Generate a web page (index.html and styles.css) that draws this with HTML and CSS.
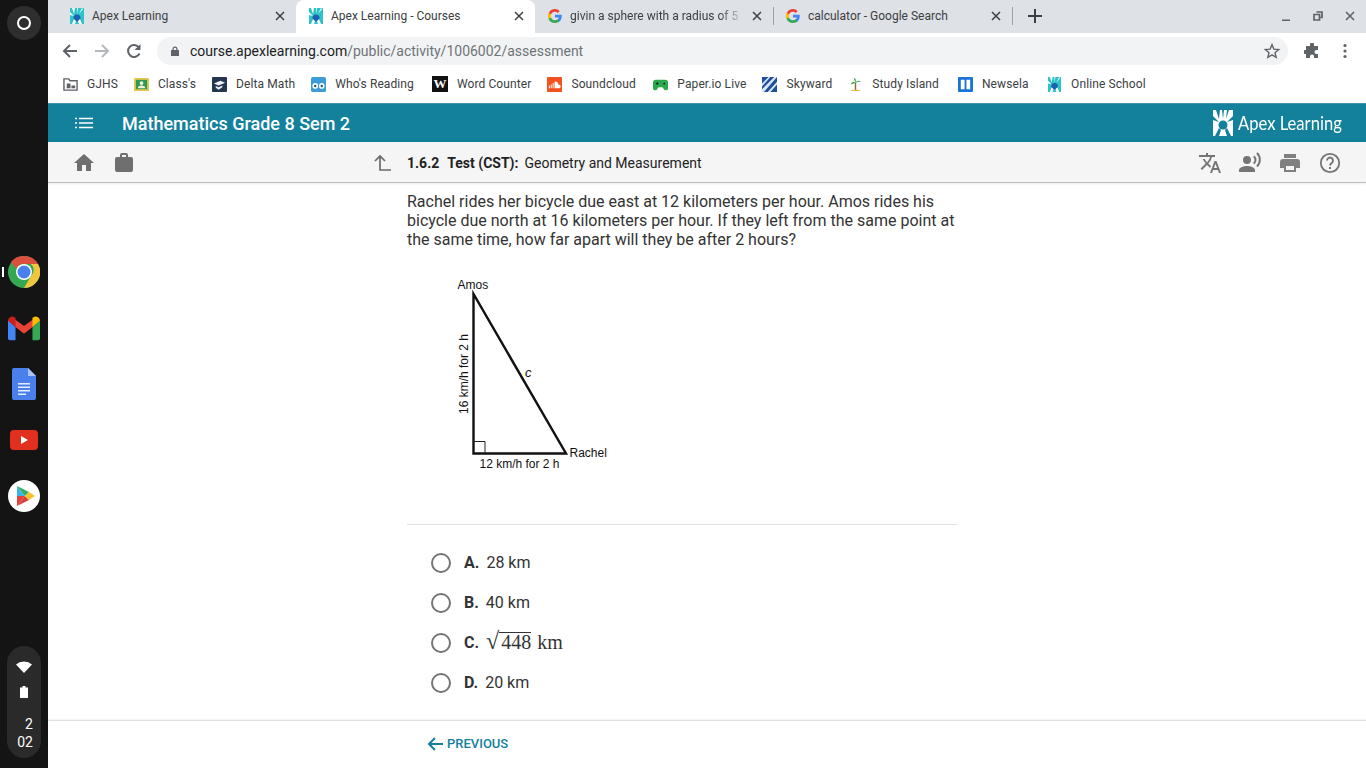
FILE: index.html
```html
<!DOCTYPE html>
<html lang="en">
<head>
<meta charset="utf-8">
<title>Apex Learning - Courses</title>
<link rel="stylesheet" href="styles.css">
</head>
<body>
<div class="screen">
  <aside class="shelf">
    <div class="launcher"><span class="launcher-ring"></span></div>
    <div class="apps">
      <div class="app-slot running">
        <svg class="app" viewBox="0 0 32 32"><circle cx="16" cy="16" r="16" fill="#34a853"/><path d="M16 0a16 16 0 0 1 14 8H16a8 8 0 0 0-7.500 5L3 6A16 16 0 0 1 16 0z" fill="#d9503f"/><path d="M30 8a16 16 0 0 1-14 24l7-12a8 8 0 0 0 0-12z" fill="#f0c63e"/><circle cx="16" cy="16" r="8" fill="#fff"/><circle cx="16" cy="16" r="6.500" fill="#4a80ec"/></svg>
      </div>
      <div class="app-slot">
        <svg class="app" viewBox="0 0 34 26"><path d="M0 5v19a2 2 0 0 0 2 2h6V12z" fill="#4285f4"/><path d="M34 5v19a2 2 0 0 1-2 2h-6V12z" fill="#34a853"/><path d="M0 5l8 7 9 7 9-7 8-7-5-3-12 9L5 2z" fill="#ea4335"/><path d="M0 5a4.500 4.500 0 0 1 7-3.500L8 2v10z" fill="#c5221f"/><path d="M34 5a4.500 4.500 0 0 0-7-3.500L26 2v10z" fill="#fbbc04"/></svg>
      </div>
      <div class="app-slot">
        <svg class="app doc" viewBox="0 0 24 32"><path d="M2 0h14l8 8v22a2 2 0 0 1-2 2H2a2 2 0 0 1-2-2V2a2 2 0 0 1 2-2z" fill="#4a80ec"/><path d="M16 0l8 8h-8z" fill="#a9c4f5"/><path d="M6 15h12v1.500H6zM6 18.500h12V20H6zM6 22h12v1.500H6zM6 25.500h8V27H6z" fill="#e4ecfc"/></svg>
      </div>
      <div class="app-slot">
        <svg class="app yt" viewBox="0 0 28 20"><rect width="28" height="20" rx="4" fill="#e1301e"/><path d="M11 6l7 4-7 4z" fill="#fff"/></svg>
      </div>
      <div class="app-slot">
        <svg class="app" viewBox="0 0 32 32"><circle cx="16" cy="16" r="16" fill="#fff"/><path d="M9 6v10h8z" fill="#3bb6e8"/><path d="M9 26V16h8z" fill="#e0433c"/><path d="M9 6l8 10 4-4z" fill="#38ad63"/><path d="M9 26l8-10 4 4z" fill="#d6403f"/><path d="M21 12l6 4-6 4-4-4z" fill="#f8c02c"/></svg>
      </div>
    </div>
    <div class="tray">
      <svg class="tray-wifi" viewBox="0 0 16 12"><path d="M0 3.500a12 12 0 0 1 16 0L8 12z" fill="#fff"/></svg>
      <svg class="tray-batt" viewBox="0 0 8 12"><path d="M2.500 0h3v1.500H8V12H0V1.500h2.500z" fill="#fff"/></svg>
      <div class="tray-time">2<br>02</div>
    </div>
  </aside>

  <div class="desktop">
    <div class="tabstrip">
      <div class="tab"><svg class="fav" viewBox="0 0 14 16"><use href="#apex"/></svg><span class="tab-title">Apex Learning</span><svg class="tab-x" viewBox="0 0 10 10"><path d="M1 1l8 8M9 1L1 9" stroke="#3c4043" stroke-width="1.500"/></svg></div>
      <div class="tab active"><svg class="fav" viewBox="0 0 14 16"><use href="#apex"/></svg><span class="tab-title">Apex Learning - Courses</span><svg class="tab-x" viewBox="0 0 10 10"><path d="M1 1l8 8M9 1L1 9" stroke="#3c4043" stroke-width="1.500"/></svg></div>
      <div class="tab"><svg class="fav" viewBox="0 0 14 14"><use href="#goog"/></svg><span class="tab-title fade">givin a sphere with a radius of 5</span><svg class="tab-x" viewBox="0 0 10 10"><path d="M1 1l8 8M9 1L1 9" stroke="#3c4043" stroke-width="1.500"/></svg></div>
      <div class="tab sep"><svg class="fav" viewBox="0 0 14 14"><use href="#goog"/></svg><span class="tab-title">calculator - Google Search</span><svg class="tab-x" viewBox="0 0 10 10"><path d="M1 1l8 8M9 1L1 9" stroke="#3c4043" stroke-width="1.500"/></svg></div>
      <div class="newtab">
        <svg viewBox="0 0 14 14" width="14" height="14"><path d="M7 0v14M0 7h14" stroke="#3c4043" stroke-width="2"/></svg>
      </div>
      <div class="winctl">
        <svg viewBox="0 0 10 10" width="10" height="10"><path d="M1 9.500h8" stroke="#5f6368" stroke-width="2"/></svg>
        <svg viewBox="0 0 10 10" width="10" height="10"><path d="M3.500 1h5.500v5.500H7.500M1 3.500h5.500V9H1z" fill="none" stroke="#5f6368" stroke-width="1.700"/></svg>
        <svg viewBox="0 0 10 10" width="10" height="10"><path d="M1 1l8 8M9 1L1 9" stroke="#5f6368" stroke-width="1.600"/></svg>
      </div>
    </div>

    <div class="toolbar">
      <svg class="nav" viewBox="0 0 16 16"><path d="M15 8H2M8 2L2 8l6 6" fill="none" stroke="#5f6368" stroke-width="2"/></svg>
      <svg class="nav" viewBox="0 0 16 16"><path d="M1 8h13M8 2l6 6-6 6" fill="none" stroke="#b4b8bc" stroke-width="2"/></svg>
      <svg class="nav" viewBox="0 0 16 16"><path d="M13.500 10.500A6 6 0 1 1 13 4.500" fill="none" stroke="#5f6368" stroke-width="2"/><path d="M14.500 1v6h-6z" fill="#5f6368"/></svg>
      <div class="omnibox">
        <svg class="lock" viewBox="0 0 8 10"><path d="M1.500 4V3a2.500 2.500 0 0 1 5 0v1H8v6H0V4zM2.700 4h2.600V3a1.300 1.300 0 0 0-2.600 0z" fill="#5f6368"/></svg>
        <span class="url"><span class="url-host">course.apexlearning.com</span>/public/activity/1006002/assessment</span>
        <svg class="star" viewBox="0 0 24 24"><path d="M12 3.500l2.500 6 6.500.5-5 4.200 1.600 6.300L12 17.200l-5.600 3.300L8 14.200 3 10l6.500-.5z" fill="none" stroke="#5f6368" stroke-width="1.800"/></svg>
      </div>
      <svg class="ext" viewBox="0 0 16 16"><path d="M6 1.500a2 2 0 0 1 4 0V3h4v4h-1.500a2 2 0 0 0 0 4H14v4h-4v-1.500a2 2 0 0 0-4 0V15H2v-4H1a2 2 0 0 1 0-4h1V3h4z" fill="#5f6368"/></svg>
      <svg class="menu" viewBox="0 0 4 16"><circle cx="2" cy="2.500" r="1.600" fill="#5f6368"/><circle cx="2" cy="8" r="1.600" fill="#5f6368"/><circle cx="2" cy="13.500" r="1.600" fill="#5f6368"/></svg>
    </div>

    <div class="bookmarks">
      <span class="bm"><svg viewBox="0 0 16 14"><path d="M1 1h5l1.500 2H15v10H1z" fill="#fff" stroke="#5f6368" stroke-width="1.500"/><path d="M4 6h4v5H4zM9 8h4v3H9z" fill="#5f6368"/></svg>GJHS</span>
      <span class="bm"><svg viewBox="0 0 16 16"><rect y="1" width="16" height="14" rx="1" fill="#e6c84a"/><rect x="2" y="3" width="12" height="10" fill="#2c9a58"/><circle cx="8" cy="6.500" r="2" fill="#f6f3d8"/><path d="M4 12a4 3 0 0 1 8 0z" fill="#f6f3d8"/></svg>Class's</span>
      <span class="bm"><svg viewBox="0 0 16 16"><rect width="16" height="16" rx="1" fill="#24364f"/><path d="M2 7l7-3 5 2-7 3zM4 9.500l3 1.500 4-2v2l-4 2.500-3-2z" fill="#eef1f5"/></svg>Delta Math</span>
      <span class="bm"><svg viewBox="0 0 16 16"><rect width="16" height="16" rx="2" fill="#3d9bd6"/><circle cx="4.500" cy="9.500" r="3" fill="#fff"/><circle cx="11.500" cy="9.500" r="3" fill="#fff"/><circle cx="4.500" cy="9.500" r="1.300" fill="#24537a"/><circle cx="11.500" cy="9.500" r="1.300" fill="#24537a"/></svg>Who's Reading</span>
      <span class="bm bm-word"><span class="bm-w">W</span>Word Counter</span>
      <span class="bm"><svg viewBox="0 0 16 16"><rect width="16" height="16" rx="1" fill="#f4511e"/><path d="M2 12V9h1v3zM4 12V8h1v4zM6 12V6.500h1V12zM8 12V5a3.500 3.500 0 0 1 4 3 2 2 0 0 1 1 4z" fill="#fff"/></svg>Soundcloud</span>
      <span class="bm bm-paper"><svg viewBox="0 0 16 14"><path d="M3 2h10a3 3 0 0 1 3 3v6a2 2 0 0 1-2 2h-1.500L10 10H6l-2.500 3H2a2 2 0 0 1-2-2V5a3 3 0 0 1 3-3z" fill="#2aa84a"/><path d="M3 6h3M4.500 4.500v3" stroke="#123" stroke-width="1"/><circle cx="12" cy="6" r="1" fill="#123"/></svg>Paper.io Live</span>
      <span class="bm"><svg viewBox="0 0 16 16"><rect width="16" height="16" fill="#1d4f9c"/><path d="M0 13L13 0h3L2 16H0zM6 16L16 5v3L9 16zM0 7l7-7h2L0 10z" fill="#d8e6f6"/></svg>Skyward</span>
      <span class="bm"><svg viewBox="0 0 16 16"><path d="M8 15V6" stroke="#8a6a2e" stroke-width="1.500"/><path d="M8 6L3 8c1-3 3-4 5-2zm0 0c1-2 4-3 6-1l-3 0zM8 6L6 1c2 0 3 2 2 5z" fill="#34a04f"/><path d="M2 15c3-2 9-2 12 0z" fill="#e8b83c"/></svg>Study Island</span>
      <span class="bm bm-news"><svg viewBox="0 0 16 16"><rect width="16" height="16" rx="1" fill="#1a73d8"/><path d="M3 3h4v10H3zM9 3h4v10H9z" fill="#fff"/></svg>Newsela</span>
      <span class="bm bm-online"><svg viewBox="0 0 14 16"><use href="#apex"/></svg>Online School</span>
    </div>

    <header class="course-bar">
      <svg class="hamb" viewBox="0 0 18 12"><path d="M0 1.500h2M4 1.500h14M0 6h2M4 6h14M0 10.500h2M4 10.500h14" stroke="#fff" stroke-width="1.600"/></svg>
      <h1 class="course-title">Mathematics Grade 8 Sem 2</h1>
      <div class="brand">
        <svg class="brand-mark" viewBox="0 0 20 26"><rect width="20" height="26" fill="#fff"/><path d="M3 0l3 9 1-9zM9 0l1 9 1-9zM14 0l-1 9 3-9zM0 6l6 6-6-2zM20 6l-6 6 6-2z" fill="#13819b"/><circle cx="10" cy="15" r="4.500" fill="#13819b"/><path d="M2 26l4-8 2 2-2 6zM18 26l-4-8-2 2 2 6z" fill="#13819b"/></svg>
        <span class="brand-name">Apex Learning</span>
      </div>
    </header>

    <nav class="sub-bar">
      <div class="sub-left">
        <svg class="ico" viewBox="0 0 24 24"><path d="M10 20v-6h4v6h5v-8h3L12 3 2 12h3v8z" fill="#6f6f6f"/></svg>
        <svg class="ico" viewBox="0 0 24 24"><path d="M8 6V4a2 2 0 0 1 2-2h4a2 2 0 0 1 2 2v2h3a2 2 0 0 1 2 2v11a2 2 0 0 1-2 2H5a2 2 0 0 1-2-2V8a2 2 0 0 1 2-2zm2 0h4V4h-4z" fill="#6f6f6f"/></svg>
      </div>
      <div class="crumb">
        <svg class="up" viewBox="0 0 18 18"><path d="M2 7l5-5 5 5M7 2v14h11" fill="none" stroke="#6b6b6b" stroke-width="1.700"/></svg>
        <span class="crumb-num">1.6.2</span><span class="crumb-type">Test (CST):</span><span class="crumb-name">Geometry and Measurement</span>
      </div>
      <div class="sub-right">
        <svg class="ico" viewBox="0 0 24 24"><path d="M12.900 15.100l-2.600-2.500A17.500 17.500 0 0 0 14.100 6H17V4h-7V2H8v2H1v2h11.200A15.700 15.700 0 0 1 9 11.400 15.700 15.700 0 0 1 6.700 8h-2c.7 1.600 1.700 3.200 3 4.600l-5.100 5L4 19l5-5 3.100 3.100zM18.500 10h-2L12 22h2l1.100-3h4.800l1.100 3h2zm-2.600 7l1.600-4.300 1.600 4.300z" fill="#757575"/></svg>
        <svg class="ico" viewBox="0 0 24 24"><circle cx="9" cy="9" r="4" fill="#757575"/><path d="M9 15c-2.700 0-8 1.300-8 4v2h16v-2c0-2.700-5.300-4-8-4z" fill="#757575"/><path d="M15.800 5.300a5 5 0 0 1 0 7.400M19 2a9.500 9.500 0 0 1 0 13.500" fill="none" stroke="#757575" stroke-width="2"/></svg>
        <svg class="ico" viewBox="0 0 24 24"><path d="M6 3h12v4H6zM5 8h14a3 3 0 0 1 3 3v6h-4v4H6v-4H2v-6a3 3 0 0 1 3-3zm3 7v4h8v-4z" fill="#808080"/></svg>
        <svg class="ico" viewBox="0 0 24 24"><circle cx="12" cy="12" r="9.200" fill="none" stroke="#757575" stroke-width="1.800"/><path d="M9 9.500a3 3 0 1 1 4.700 2.500c-1.100.8-1.700 1.300-1.700 2.500" fill="none" stroke="#757575" stroke-width="1.900"/><rect x="11" y="16" width="2" height="2" fill="#757575"/></svg>
      </div>
    </nav>

    <main class="content">
      <div class="column">
        <p class="question">Rachel rides her bicycle due east at 12 kilometers per hour. Amos rides his bicycle due north at 16 kilometers per hour. If they left from the same point at the same time, how far apart will they be after 2 hours?</p>
        <svg class="diagram" viewBox="0 0 210 210" width="210" height="210">
          <path d="M51.500 24V183.500H144L51.500 24z" fill="none" stroke="#111" stroke-width="2.400" stroke-linejoin="miter"/>
          <path d="M51.500 171.500H63V183" fill="none" stroke="#222" stroke-width="1"/>
          <text x="35.500" y="18.500" class="dia">Amos</text>
          <text x="147.500" y="187" class="dia">Rachel</text>
          <text x="57.500" y="198" class="dia">12 km/h for 2 h</text>
          <text x="103" y="107" class="dia dia-c">c</text>
          <text class="dia" transform="translate(45.500 144) rotate(-90)">16 km/h for 2 h</text>
        </svg>
        <hr class="rule">
        <ul class="choices">
          <li class="choice"><span class="radio"></span><b class="letter">A.</b><span>28 km</span></li>
          <li class="choice"><span class="radio"></span><b class="letter">B.</b><span>40 km</span></li>
          <li class="choice"><span class="radio"></span><b class="letter">C.</b><span class="math"><span class="surd">√</span><span class="radicand">448</span><span>km</span></span></li>
          <li class="choice"><span class="radio"></span><b class="letter">D.</b><span>20 km</span></li>
        </ul>
      </div>
    </main>

    <footer class="footer">
      <svg class="back" viewBox="0 0 16 14"><path d="M16 7H2M8 1L2 7l6 6" fill="none" stroke="#13819b" stroke-width="2"/></svg>
      <span class="prev">PREVIOUS</span>
    </footer>
  </div>
</div>

<svg class="defs" width="0" height="0">
  <defs>
    <symbol id="apex" viewBox="0 0 14 16">
      <rect width="14" height="16" fill="#2cc4c9"/>
      <path d="M2 0l2 6 1-6zM7 0v6l1-6zM12 0l-3 6 4-5zM0 4l4 4-4-1z" fill="#fff"/>
      <circle cx="7" cy="10" r="3.500" fill="#1d5fb0"/>
      <path d="M2 16l2-5 2 2-1 3zM12 16l-2-5-2 2 1 3z" fill="#fff"/>
    </symbol>
    <symbol id="goog" viewBox="0 0 14 14">
      <path d="M13.700 7.200c0-.5 0-1-.1-1.400H7v2.700h3.800a3.200 3.200 0 0 1-1.400 2.100v1.700h2.300c1.300-1.200 2-3 2-5.100z" fill="#4285f4"/>
      <path d="M7 14c1.900 0 3.500-.6 4.700-1.700l-2.300-1.700a4.300 4.300 0 0 1-6.400-2.200H.7v1.800A7 7 0 0 0 7 14z" fill="#34a853"/>
      <path d="M3 8.300a4.100 4.100 0 0 1 0-2.700V3.800H.7a7 7 0 0 0 0 6.300z" fill="#fbbc05"/>
      <path d="M7 2.800c1 0 2 .4 2.700 1.100l2-2A7 7 0 0 0 .7 3.800L3 5.600a4.200 4.200 0 0 1 4-2.800z" fill="#ea4335"/>
    </symbol>
  </defs>
</svg>
</body>
</html>
```
FILE: styles.css
```css
* { box-sizing: border-box; }
html, body { margin: 0; padding: 0; height: 100%; overflow: hidden; }
body { font-family: Roboto, "Liberation Sans", sans-serif; color: #333; background: #fff; }
.defs { position: absolute; }

.screen { display: flex; width: 1366px; height: 768px; }

/* Chrome OS shelf */
.shelf { width: 48px; flex: none; background: #141414; display: flex; flex-direction: column; align-items: center; }
.launcher { width: 34px; height: 34px; margin-top: 6px; border-radius: 50%; background: #2e2e2e; display: flex; align-items: center; justify-content: center; }
.launcher-ring { width: 14px; height: 14px; border: 2px solid #fff; border-radius: 50%; }
.apps { margin-top: 204px; display: flex; flex-direction: column; }
.app-slot { width: 48px; height: 56px; display: flex; align-items: center; justify-content: center; position: relative; }
.app-slot.running::before { content: ""; position: absolute; left: 2px; top: 23px; width: 2px; height: 10px; background: #fff; }
.app { width: 32px; height: 32px; display: block; }
.app.doc { width: 24px; height: 32px; }
.app.yt { width: 28px; height: 20px; }
.tray { margin-top: 122px; width: 34px; height: 112px; border-radius: 17px; background: #2a2a2a; display: flex; flex-direction: column; align-items: center; padding-top: 15px; }
.tray-wifi { width: 16px; height: 12px; }
.tray-batt { width: 8px; height: 12px; margin-top: 13px; }
.tray-time { color: #fff; font-size: 14px; line-height: 18px; text-align: right; margin-top: 17px; margin-left: 2px; }

.desktop { flex: 1; min-width: 0; display: flex; flex-direction: column; height: 768px; }

/* Tabs */
.tabstrip { height: 33px; background: #dee1e6; display: flex; align-items: stretch; padding-left: 9px; flex: none; }
.tab { width: 239px; display: flex; align-items: center; padding: 0 10px 2px 13px; font-size: 12px; color: #3c4043; white-space: nowrap; }
.tab.active { background: #fff; border-radius: 8px 8px 0 0; }
.tab:nth-child(3) { width: 238px; }
.tab.sep { width: 240px; height: 18px; align-self: center; margin-top: -2px; padding: 0 10px 0 12px; border-left: 1px solid #9aa0a6; border-right: 1px solid #9aa0a6; }
.fav { width: 14px; height: 16px; flex: none; margin-right: 8px; }
.tab-title { flex: 1; min-width: 0; overflow: hidden; }
.tab-title.fade { -webkit-mask-image: linear-gradient(to right, #000 85%, transparent 100%); mask-image: linear-gradient(to right, #000 85%, transparent 100%); }
.tab-x { width: 10px; height: 10px; flex: none; margin-left: 7px; margin-right: 1px; }
.newtab { width: 44px; display: flex; align-items: center; justify-content: center; padding-bottom: 2px; }
.winctl { margin-left: auto; display: flex; gap: 22px; align-items: center; padding: 0 11px 2px 0; }
.winctl svg { flex: none; }

/* Toolbar */
.toolbar { height: 36px; background: #fff; display: flex; align-items: center; flex: none; padding-left: 14px; }
.nav { width: 16px; height: 16px; margin-right: 16px; flex: none; }
.omnibox { width: 1131px; height: 28px; margin-left: -1px; background: #f1f3f4; border-radius: 14px; display: flex; align-items: center; padding: 0 7px 0 14px; }
.lock { width: 8px; height: 10px; flex: none; margin-right: 11px; }
.url { font-size: 14px; color: #6f7378; white-space: nowrap; flex: 1; }
.url-host { color: #202124; }
.star { width: 18px; height: 18px; flex: none; }
.ext { width: 16px; height: 16px; margin-left: 16px; flex: none; }
.menu { width: 4px; height: 16px; margin-left: 23px; flex: none; }

/* Bookmarks */
.bookmarks { height: 34px; background: #fff; display: flex; align-items: center; padding: 0 0 4px 15px; gap: 16px; flex: none; font-size: 12px; letter-spacing: .1px; color: #3c4043; }
.bm { display: flex; align-items: center; gap: 9px; white-space: nowrap; }
.bm svg { width: 15px; height: 15px; flex: none; }
.bm-word { margin-left: 2px; }
.bm-paper { margin-left: 1.5px; }
.bm-news { margin-left: 3px; }
.bm-online { margin-left: 2.5px; }
.bm-w { width: 16px; height: 16px; background: #111; color: #fff; font-family: "Liberation Serif", serif; font-weight: 700; font-size: 13px; line-height: 16px; text-align: center; }

/* Course bar */
.course-bar { height: 39px; background: #13819b; display: flex; align-items: center; padding-left: 27px; flex: none; border-top: 1px solid #3d97ad; }
.hamb { width: 18px; height: 12px; flex: none; }
.course-title { margin: 0 0 0 29px; font-size: 18px; font-weight: 500; color: #fff; white-space: nowrap; }
.brand { margin-left: auto; display: flex; align-items: center; gap: 5px; padding-right: 24px; }
.brand-mark { width: 20px; height: 26px; }
.brand-name { color: #fff; font-family: Lato, "Open Sans", sans-serif; font-size: 20px; white-space: nowrap; padding-bottom: 2px; transform: scaleX(.83); transform-origin: left center; margin-right: -21px; }

/* Sub bar */
.sub-bar { height: 41px; background: #f5f5f5; border-bottom: 1px solid #bdbdbd; display: flex; align-items: center; flex: none; padding-top: 2px; box-shadow: 0 1px 2px rgba(0,0,0,.08); position: relative; }
.sub-left { display: flex; gap: 16px; padding-left: 24px; width: 325px; flex: none; }
.sub-right { margin-left: auto; display: flex; gap: 16px; padding-right: 24px; }
.ico { width: 24px; height: 24px; flex: none; display: block; }
.crumb { display: flex; align-items: center; font-size: 14px; color: #222; white-space: nowrap; }
.up { width: 18px; height: 18px; margin-right: 16px; flex: none; }
.crumb-num { font-weight: 700; margin-right: 8px; }
.crumb-type { font-weight: 700; margin-right: 6px; }

/* Content */
.content { flex: 1; min-height: 0; overflow: hidden; padding: 9px 0 0 359px; background: #fff; }
.column { width: 550px; }
.question { margin: 0; font-size: 16px; line-height: 19px; color: #333; }
.diagram { display: block; margin: 21px 0 0 15px; height: 210px; }
.dia { font-family: "Liberation Sans", Arial, sans-serif; font-size: 12px; fill: #111; }
.dia-c { font-style: italic; font-size: 13px; }
.rule { border: 0; border-top: 1px solid #e0e0e0; margin: 44px 0 0; }
.choices { list-style: none; margin: 17px 0 0; padding: 0 0 0 24px; }
.choice { height: 40px; display: flex; align-items: center; font-size: 16px; color: #333; }
.radio { width: 20px; height: 20px; border: 2px solid #757575; border-radius: 50%; margin-right: 13px; flex: none; margin-top: 2px; }
.letter { font-weight: 700; margin-right: 7px; }
.math { font-family: "Liberation Serif", serif; font-size: 20px; white-space: nowrap; display: flex; align-items: baseline; gap: 6px; }
.surd { font-size: 24px; line-height: 20px; margin-right: -6px; }
.radicand { border-top: 1px solid #333; line-height: 19px; padding-left: 2px; }

/* Footer */
.footer { height: 48px; flex: none; background: #fff; border-top: 1px solid #e0e0e0; box-shadow: 0 -1px 2px rgba(0,0,0,.06); display: flex; align-items: center; padding: 0 0 2px 379px; position: relative; }
.back { width: 16px; height: 14px; margin-right: 4px; flex: none; }
.prev { font-size: 13px; font-weight: 500; color: #13819b; }
```
